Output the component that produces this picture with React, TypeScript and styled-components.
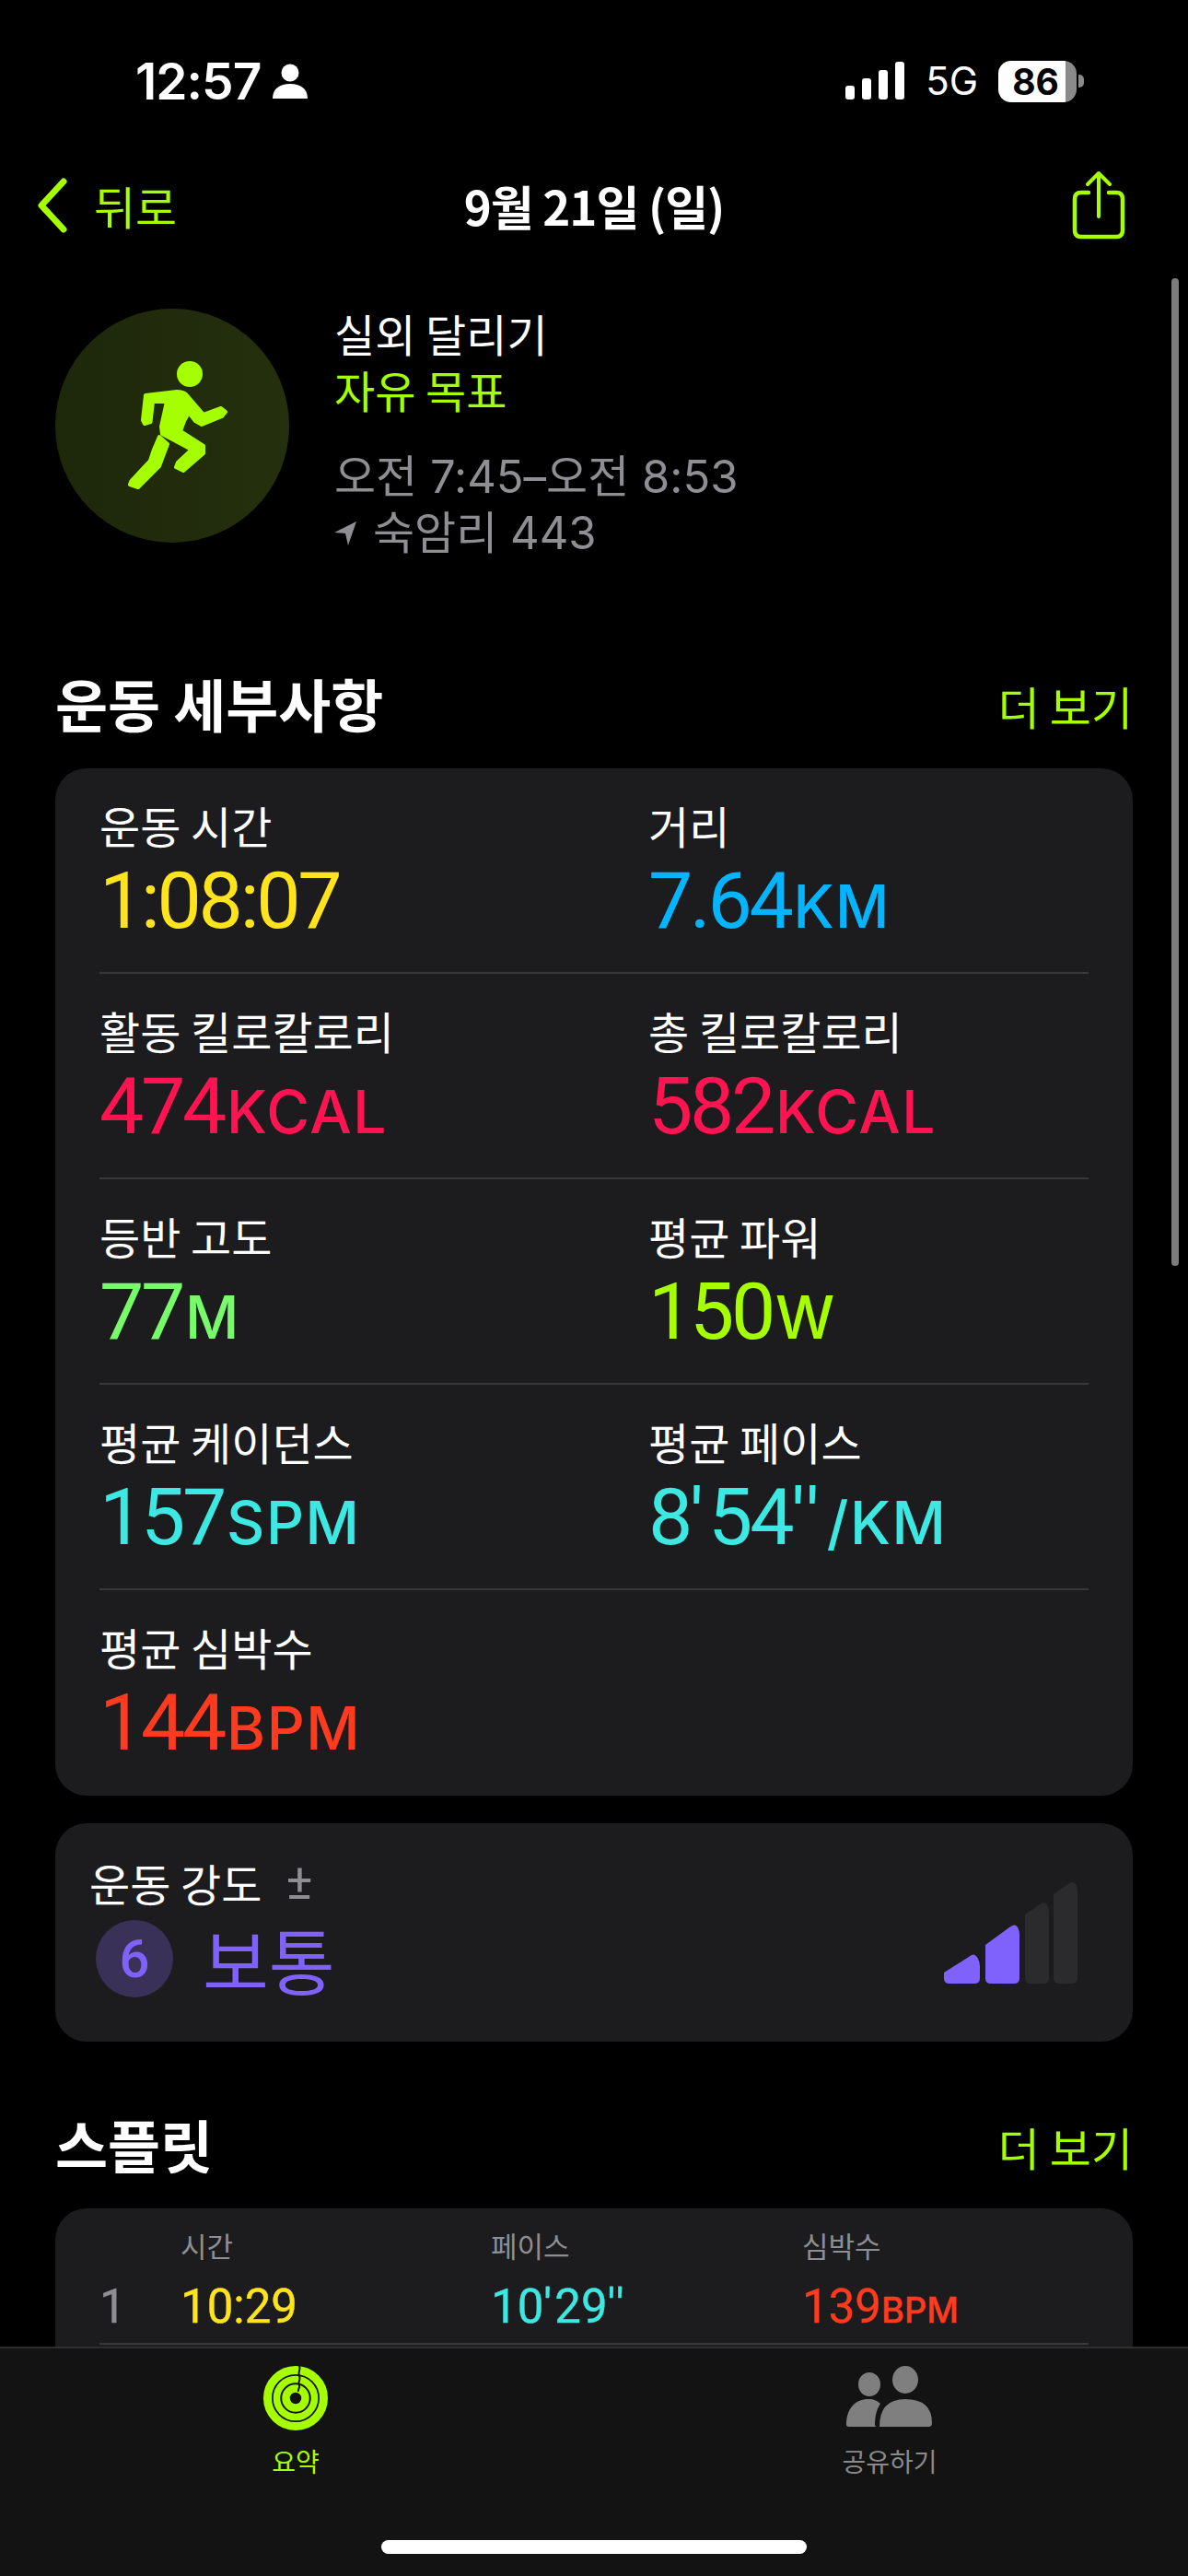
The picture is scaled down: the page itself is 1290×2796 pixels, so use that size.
import React from "react";
import styled, { createGlobalStyle } from "styled-components";

const LIME = "#a6ff00";
const KR = `"Noto Sans CJK KR", sans-serif`;
const NUM = `Roboto, "Noto Sans CJK KR", sans-serif`;
const LATIN = `Inter, "Noto Sans CJK KR", sans-serif`;

const Global = createGlobalStyle`
  html, body { margin: 0; padding: 0; background: #000; }
  * { box-sizing: border-box; }
`;

const Page = styled.div`
  position: relative;
  width: 1290px;
  height: 2796px;
  overflow: hidden;
  background: #000;
  color: #fff;
  font-family: ${KR};
`;

const StatusBar = styled.div`
  height: 176px;
  padding: 0 113px 0 147px;
  display: flex;
  align-items: center;
  justify-content: space-between;
`;
const StatusLeft = styled.div`
  display: flex;
  align-items: center;
  gap: 13px;
`;
const Clock = styled.span`
  font: 600 55px/60px Inter, sans-serif;
  letter-spacing: -1px;
`;
const StatusRight = styled.div`
  display: flex;
  align-items: center;
`;
const NetLabel = styled.span`
  font: 400 42px/48px Inter, sans-serif;
  margin: 0 22px 0 23px;
`;
const Battery = styled.div`
  width: 85px;
  height: 45px;
  border-radius: 14px;
  background: linear-gradient(90deg, #fff 0 73px, #8a8a8a 73px);
  color: #000;
  font: 700 39px/45px Inter, sans-serif;
  text-align: center;
  padding-right: 4px;
`;
const BatteryCap = styled.div`
  width: 6px;
  height: 14px;
  margin-left: 2px;
  border-radius: 0 5px 5px 0;
  background: #8a8a8a;
`;

const NavBar = styled.div`
  height: 94px;
  padding: 0 40px;
  display: grid;
  grid-template-columns: 1fr auto 1fr;
  align-items: center;
`;
const Back = styled.div`
  display: flex;
  align-items: center;
  gap: 28px;
  color: ${LIME};
  font-size: 49px;
  line-height: 60px;
`;
const NavTitle = styled.div`
  font-size: 51px;
  font-weight: 700;
  line-height: 60px;
  letter-spacing: -1px;
`;
const NavAction = styled.div`
  justify-self: end;
  display: flex;
  margin-right: 28px;
`;

const Hero = styled.div`
  display: flex;
  gap: 49px;
  padding: 65px 60px 0;
`;
const Badge = styled.div`
  flex: none;
  width: 254px;
  height: 254px;
  border-radius: 50%;
  background: linear-gradient(90deg, #1d270a, #25300e);
  display: flex;
`;
const HeroText = styled.div`
  display: flex;
  flex-direction: column;
  margin-top: -4px;
`;
const HeroLine = styled.div<{ $color: string; $gap?: number }>`
  font-size: 48px;
  line-height: 61px;
  color: ${(p) => p.$color};
  margin-top: ${(p) => p.$gap ?? 0}px;
  display: flex;
  align-items: center;
  gap: 18px;
  white-space: nowrap;
`;
const HeroMeta = styled(HeroLine)`
  font-family: ${LATIN};
  font-size: 49px;
`;

const SectionHead = styled.div<{ $top: number }>`
  display: flex;
  justify-content: space-between;
  align-items: center;
  padding: 0 60px;
  margin-top: ${(p) => p.$top}px;
  height: 76px;
`;
const SectionTitle = styled.h2`
  margin: 0;
  font-size: 62px;
  line-height: 76px;
  font-weight: 700;
`;
const More = styled.span`
  color: ${LIME};
  font-size: 49px;
  line-height: 60px;
  margin-top: 6px;
`;

const Card = styled.div<{ $top: number }>`
  margin: ${(p) => p.$top}px 60px 0;
  background: #1c1c1e;
  border-radius: 34px;
`;
const MetricCard = styled(Card)`
  padding: 0 48px;
  height: 1115px;
`;
const MetricRow = styled.div`
  height: 223px;
  display: grid;
  grid-template-columns: 596px 1fr;
  padding-top: 31px;
  border-bottom: 2px solid #38383a;
  &:last-child { border-bottom: none; }
`;
const MetricCell = styled.div`
  display: flex;
  flex-direction: column;
  min-width: 0;
`;
const MetricLabel = styled.div`
  font-size: 48px;
  line-height: 60px;
  white-space: nowrap;
`;
const MetricValue = styled.div<{ $color: string }>`
  color: ${(p) => p.$color};
  font-family: ${NUM};
  font-size: 86px;
  line-height: 100px;
  margin-top: 3px;
  white-space: nowrap;
  letter-spacing: -3.3px;
`;
const Prime = styled.span<{ $space: number }>`
  letter-spacing: ${(p) => p.$space}px;
`;
const Unit = styled.span`
  font-family: Inter, sans-serif;
  font-size: 64px;
  font-weight: 500;
  letter-spacing: 1.5px;
  margin-left: 3px;
`;

const IntensityCard = styled(Card)`
  height: 237px;
  padding: 34px 60px 0 37px;
  display: flex;
  justify-content: space-between;
`;
const IntensityLeft = styled.div`
  display: flex;
  flex-direction: column;
`;
const IntensityLabel = styled.div`
  font-size: 48px;
  line-height: 60px;
  display: flex;
  align-items: center;
  gap: 26px;
`;
const PlusMinus = styled.span`
  color: #8f8f93;
  font-family: ${NUM};
  font-size: 54px;
`;
const IntensityValue = styled.div`
  display: flex;
  align-items: center;
  gap: 32px;
  margin: 8px 0 0 7px;
  color: #7f62fb;
`;
const LevelDot = styled.div`
  width: 84px;
  height: 84px;
  border-radius: 50%;
  background: #3a3159;
  display: flex;
  align-items: center;
  justify-content: center;
  font: 500 58px/1 ${NUM};
`;
const LevelText = styled.span`
  font-size: 78px;
  line-height: 90px;
`;
const LevelBars = styled.svg`
  flex: none;
  margin-top: 29px;
`;

const SplitCard = styled(Card)`
  padding: 0 48px;
  height: 300px;
`;
const SplitGrid = styled.div`
  display: grid;
  grid-template-columns: 88px 337px 338px 1fr;
`;
const SplitHead = styled.div`
  color: #8e8e93;
  font-size: 31px;
  line-height: 44px;
  padding-top: 18px;
  height: 77px;
`;
const SplitValue = styled.div<{ $color: string }>`
  color: ${(p) => p.$color};
  font: 400 51px/60px ${NUM};
  -webkit-text-stroke: 0.4px currentColor;
  height: 69px;
  white-space: nowrap;
`;
const SplitUnit = styled.span`
  font-family: Inter, sans-serif;
  font-weight: 500;
  font-size: 38px;
`;
const Rule = styled.div`
  height: 2px;
  background: #38383a;
`;

const TabBar = styled.div`
  position: absolute;
  left: 0;
  right: 0;
  bottom: 0;
  height: 249px;
  background: #131313;
  border-top: 2px solid #2e2e2e;
  display: grid;
  grid-template-columns: 642px 1fr;
`;
const Tab = styled.div<{ $color: string }>`
  color: ${(p) => p.$color};
  display: flex;
  flex-direction: column;
  align-items: center;
  padding-top: 19px;
  font-size: 28px;
  line-height: 34px;
`;
const TabIcon = styled.svg`
  margin-bottom: 16px;
`;
const HomeIndicator = styled.div`
  position: absolute;
  left: 414px;
  bottom: 24px;
  width: 462px;
  height: 15px;
  border-radius: 8px;
  background: #fff;
`;
const ScrollThumb = styled.div`
  position: absolute;
  left: 1272px;
  top: 302px;
  width: 8px;
  height: 1072px;
  border-radius: 4px;
  background: #7c7c7c;
`;

const metrics = [
  [
    { label: "운동 시간", value: "1:08:07", color: "#ffe41d" },
    { label: "거리", value: "7.64", unit: "KM", color: "#04b4ff" },
  ],
  [
    { label: "활동 킬로칼로리", value: "474", unit: "KCAL", color: "#ff1451" },
    { label: "총 킬로칼로리", value: "582", unit: "KCAL", color: "#ff1451" },
  ],
  [
    { label: "등반 고도", value: "77", unit: "M", color: "#78fb6a" },
    { label: "평균 파워", value: "150", unit: "W", color: "#a6ff00" },
  ],
  [
    { label: "평균 케이던스", value: "157", unit: "SPM", color: "#3ee8e2" },
    {
      label: "평균 페이스",
      value: (
        <>
          8<Prime $space={5}>'</Prime>54<Prime $space={5}>''</Prime>
        </>
      ),
      unit: "/KM",
      color: "#3ee8e2",
    },
  ],
  [{ label: "평균 심박수", value: "144", unit: "BPM", color: "#ff3b1f" }],
];

const Runner = () => (
  <svg width="254" height="254" viewBox="0 0 254 254" fill={LIME}>
    <ellipse cx="146" cy="71" rx="14" ry="14" />
    <path
      stroke={LIME}
      strokeWidth="4"
      strokeLinejoin="round"
      d="M98 94 L132 90 Q139 90 142 93 L161 115 L180 108 L185 112 L181 117 L159 126 L152 122 L145 113 L140 122 L136 133 L161 149 L161 157 L139 176 L131 172 L133 167 L148 153 L116 136 L115 128 L121 101 L106 101 L103.5 123 L97 125 L95 121 Z"
    />
    <path
      stroke={LIME}
      strokeWidth="4"
      strokeLinejoin="round"
      d="M113 139 L122 147 L113 171 L90 194 L81 191 L82.5 187 L103 165 L107 153 Z"
    />
  </svg>
);

const PersonGlyph = () => (
  <svg width="38" height="38" viewBox="0 0 38 38" fill="#fff">
    <circle cx="19" cy="10" r="9.5" />
    <path d="M0 38 C0 27 8 22 19 22 C30 22 38 27 38 38 Z" />
  </svg>
);

const Signal = () => (
  <svg width="64" height="42" viewBox="0 0 64 42" fill="#fff">
    <rect x="0" y="26" width="10" height="15" rx="3" />
    <rect x="18" y="18" width="10" height="23" rx="3" />
    <rect x="36" y="9" width="10" height="32" rx="3" />
    <rect x="54" y="0" width="10" height="41" rx="3" />
  </svg>
);

const Chevron = () => (
  <svg width="34" height="60" viewBox="0 0 34 60" fill="none">
    <path d="M29 4 L5 30 L29 56" stroke={LIME} strokeWidth="7" strokeLinecap="round" strokeLinejoin="round" />
  </svg>
);

const Share = () => (
  <svg width="58" height="76" viewBox="0 0 58 76" fill="none" stroke={LIME} strokeLinecap="round" strokeLinejoin="round">
    <path d="M18 24 H10 Q3 24 3 31 V65 Q3 72 10 72 H48 Q55 72 55 65 V31 Q55 24 48 24 H40" strokeWidth="4.5" />
    <path d="M29 50 V3 M17 15 L29 3 L41 15" strokeWidth="4" />
  </svg>
);

const Arrow = () => (
  <svg width="24" height="28" viewBox="0 0 24 28" fill="#8e8e93">
    <path d="M24 1 L15 27 L12 14 L0 13 Z" />
  </svg>
);

const Rings = () => (
  <TabIcon width="70" height="70" viewBox="0 0 70 70" fill="none">
    <circle cx="35" cy="35" r="30.5" stroke={LIME} strokeWidth="9" />
    <circle cx="35" cy="35" r="20.5" stroke={LIME} strokeWidth="7.5" />
    <circle cx="35" cy="35" r="10.5" stroke={LIME} strokeWidth="8.5" />
    <path d="M39 0 C41 4 37 7 39 11 C41 15 37 17 39 21 C40 24 37 25 38 28" stroke="#131313" strokeWidth="2" />
  </TabIcon>
);

const People = () => (
  <TabIcon width="94" height="70" viewBox="0 0 94 70" fill="#7f7f7f">
    <ellipse cx="25" cy="20" rx="12" ry="13" />
    <ellipse cx="64" cy="15" rx="14" ry="15" />
    <path d="M0 64 C0 46 10 36 24 36 C30 36 34 38 37 41 C33 47 31 54 31 64 Q31 66 33 66 H4 Q0 66 0 64 Z" />
    <path d="M36 66 Q36 36 64 36 Q93 36 93 62 Q93 66 89 66 Z" />
  </TabIcon>
);

const LevelGraph = () => (
  <LevelBars width="145" height="112" viewBox="0 0 145 112">
    <path d="M0 105 V99 L27 82 Q33 76 37 84 Q39 88 39 92 V105 Q39 111 33 111 H6 Q0 111 0 105 Z" fill="#7f62fb" />
    <path d="M45 105 V69 L71 50 Q78 44 81 52 Q82 55 82 58 V105 Q82 111 76 111 H51 Q45 111 45 105 Z" fill="#7f62fb" />
    <path d="M88 105 V36 L104 25 Q110 20 113 28 Q114 30 114 33 V105 Q114 111 108 111 H94 Q88 111 88 105 Z" fill="#2b2b2d" />
    <path d="M119 105 V14 L135 3 Q141 -2 144 5 Q145 7 145 10 V105 Q145 111 139 111 H125 Q119 111 119 105 Z" fill="#2b2b2d" />
  </LevelBars>
);

export default function App() {
  return (
    <Page>
      <Global />
      <StatusBar>
        <StatusLeft>
          <Clock>12:57</Clock>
          <PersonGlyph />
        </StatusLeft>
        <StatusRight>
          <Signal />
          <NetLabel>5G</NetLabel>
          <Battery>86</Battery>
          <BatteryCap />
        </StatusRight>
      </StatusBar>

      <NavBar>
        <Back>
          <Chevron />
          뒤로
        </Back>
        <NavTitle>9월 21일 (일)</NavTitle>
        <NavAction>
          <Share />
        </NavAction>
      </NavBar>

      <Hero>
        <Badge>
          <Runner />
        </Badge>
        <HeroText>
          <HeroLine $color="#fff">실외 달리기</HeroLine>
          <HeroLine $color={LIME}>자유 목표</HeroLine>
          <HeroMeta $color="#8e8e93" $gap={34}>오전 7:45–오전 8:53</HeroMeta>
          <HeroMeta $color="#8e8e93">
            <Arrow />
            숙암리 443
          </HeroMeta>
        </HeroText>
      </Hero>

      <SectionHead $top={116}>
        <SectionTitle>운동 세부사항</SectionTitle>
        <More>더 보기</More>
      </SectionHead>

      <MetricCard $top={33}>
        {metrics.map((row, i) => (
          <MetricRow key={i}>
            {row.map((m) => (
              <MetricCell key={m.label}>
                <MetricLabel>{m.label}</MetricLabel>
                <MetricValue $color={m.color}>
                  {m.value}
                  {m.unit && <Unit>{m.unit}</Unit>}
                </MetricValue>
              </MetricCell>
            ))}
          </MetricRow>
        ))}
      </MetricCard>

      <IntensityCard $top={30}>
        <IntensityLeft>
          <IntensityLabel>
            운동 강도 <PlusMinus>±</PlusMinus>
          </IntensityLabel>
          <IntensityValue>
            <LevelDot>6</LevelDot>
            <LevelText>보통</LevelText>
          </IntensityValue>
        </IntensityLeft>
        <LevelGraph />
      </IntensityCard>

      <SectionHead $top={73}>
        <SectionTitle>스플릿</SectionTitle>
        <More>더 보기</More>
      </SectionHead>

      <SplitCard $top={32}>
        <SplitGrid>
          <SplitHead />
          <SplitHead>시간</SplitHead>
          <SplitHead>페이스</SplitHead>
          <SplitHead>심박수</SplitHead>
          <SplitValue $color="#8e8e93">1</SplitValue>
          <SplitValue $color="#ffe41d">10:29</SplitValue>
          <SplitValue $color="#3ee8e2">
            10<Prime $space={3}>'</Prime>29<Prime $space={3}>''</Prime>
          </SplitValue>
          <SplitValue $color="#ff3b1f">
            139<SplitUnit>BPM</SplitUnit>
          </SplitValue>
        </SplitGrid>
        <Rule />
      </SplitCard>

      <ScrollThumb />

      <TabBar>
        <Tab $color={LIME}>
          <Rings />
          요약
        </Tab>
        <Tab $color="#8a8a8a">
          <People />
          공유하기
        </Tab>
      </TabBar>
      <HomeIndicator />
    </Page>
  );
}
